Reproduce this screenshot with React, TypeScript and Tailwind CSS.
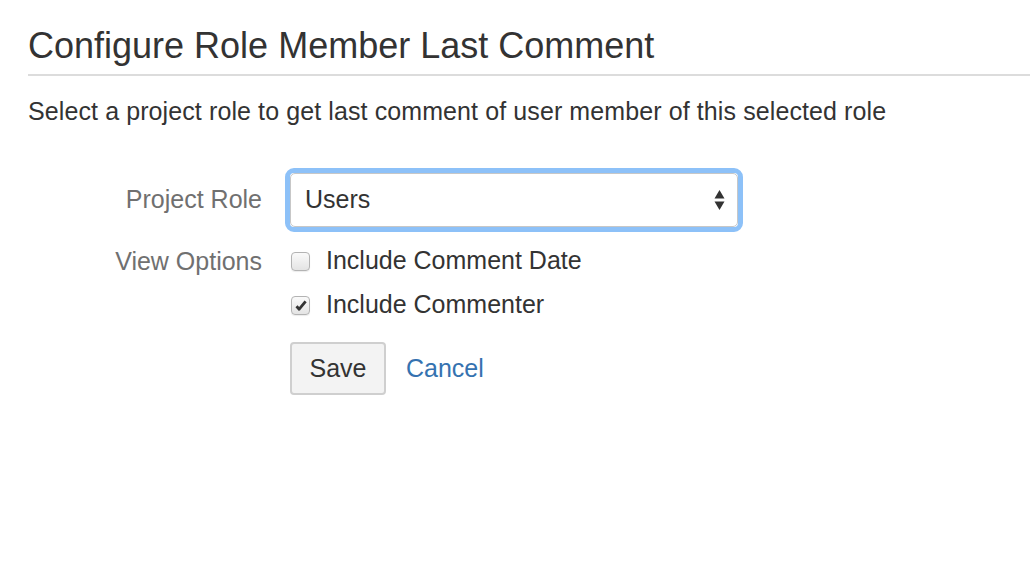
import { useState } from 'react';

const Checkbox = ({ checked, onChange }: { checked: boolean; onChange: () => void }) => (
  <button
    type="button"
    onClick={onChange}
    className="w-[19px] h-[19px] rounded-[4px] border border-[#b3b3b3] bg-gradient-to-b from-[#fafafa] to-[#e4e4e4] shadow-[0_1px_1px_rgba(0,0,0,0.08)] flex items-center justify-center shrink-0"
  >
    {checked && (
      <svg width="12" height="11" viewBox="0 0 12 11">
        <path d="M1.5 6.2 L4.2 9.2 L10.6 1.4" fill="none" stroke="#333" strokeWidth="2.8" strokeLinejoin="round" />
      </svg>
    )}
  </button>
);

const App = () => {
  const [includeDate, setIncludeDate] = useState(false);
  const [includeCommenter, setIncludeCommenter] = useState(true);

  return (
    <div className="w-[1030px] h-[562px] bg-white text-[#333] font-['Liberation_Sans',Arial,sans-serif] overflow-hidden">
      <div className="pl-[28px] pt-[24px]">
        <h1 className="text-[36px] leading-[44px] text-[#333]">Configure Role Member Last Comment</h1>
        <div className="mt-[6px] h-[2px] bg-[#dcdcdc]" />
        <p className="mt-[20px] text-[25px] leading-[30px] tracking-[0.1px]">
          Select a project role to get last comment of user member of this selected role
        </p>
      </div>

      {/* Form */}
      <div className="mt-[42px] flex flex-col">
        <div className="flex items-center">
          <label className="w-[262px] text-right text-[25px] text-[#707070]">Project Role</label>
          <div className="ml-[23px] rounded-[9px] border-[5px] border-[#8dc1f8]">
            <div className="w-[448px] h-[54px] rounded-[5px] border border-[#c7c7c7] bg-white flex items-center justify-between pl-[14px] pr-[12px]">
              <span className="text-[25px] text-[#333]">Users</span>
              <svg width="11" height="22" viewBox="0 0 11 22">
                <path d="M5.5 1 L10.5 9.5 L0.5 9.5 Z" fill="#333" />
                <path d="M0.5 12.5 L10.5 12.5 L5.5 21 Z" fill="#333" />
              </svg>
            </div>
          </div>
        </div>

        <div className="mt-[14px] flex">
          <label className="w-[262px] text-right text-[25px] leading-[30px] text-[#707070]">View Options</label>
          <div className="ml-[29px] flex flex-col">
            <div className="flex items-center gap-[16px] h-[30px]">
              <Checkbox checked={includeDate} onChange={() => setIncludeDate(!includeDate)} />
              <span className="text-[25px]">Include Comment Date</span>
            </div>
            <div className="mt-[14px] flex items-center gap-[16px] h-[30px]">
              <Checkbox checked={includeCommenter} onChange={() => setIncludeCommenter(!includeCommenter)} />
              <span className="text-[25px]">Include Commenter</span>
            </div>
            <div className="mt-[22px] flex items-center gap-[20px] -ml-[1px]">
              <button className="w-[96px] h-[53px] rounded-[4px] border-[2px] border-[#cfcfcf] bg-[#f3f3f3] text-[25px] text-[#333]">
                Save
              </button>
              <a href="#" className="text-[25px] text-[#3572b0]">Cancel</a>
            </div>
          </div>
        </div>
      </div>
    </div>
  );
};

export default App;
